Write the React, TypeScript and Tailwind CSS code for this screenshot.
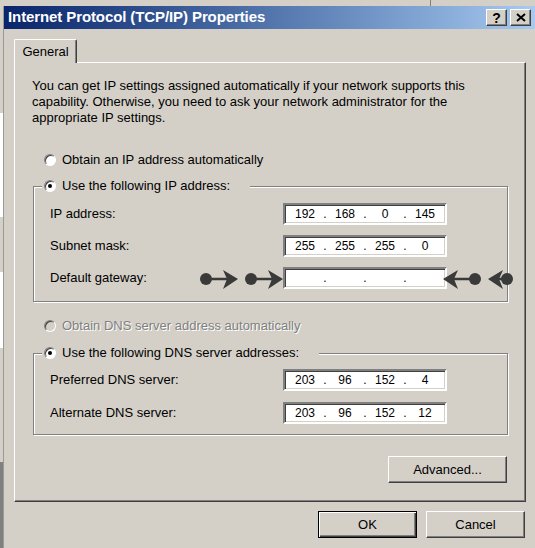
import React, { Fragment } from "react";

// Win2000-style radio button
const Radio = ({ checked = false, disabled = false }: { checked?: boolean; disabled?: boolean }) => (
  <span
    className={
      disabled
        ? "flex h-[12px] w-[12px] shrink-0 items-center justify-center rounded-full border border-t-[#808080] border-l-[#808080] border-r-white border-b-white bg-[#d4d0c8] shadow-[inset_1px_1px_0_#404040]"
        : "flex h-[12px] w-[12px] shrink-0 items-center justify-center rounded-full border border-t-[#808080] border-l-[#808080] border-r-white border-b-white bg-white shadow-[inset_1px_1px_0_#404040]"
    }
  >
    {checked && <span className="h-[4px] w-[4px] rounded-full bg-black" />}
  </span>
);

const IpField = ({ parts }: { parts: string[] }) => (
  <div className="flex h-[22px] w-[164px] items-center border-2 border-t-[#808080] border-l-[#808080] border-r-white border-b-white bg-white pl-[5px] text-[12px] shadow-[inset_1px_1px_0_#404040,inset_-1px_-1px_0_#d4d0c8]">
    {parts.map((p, i) => (
      <Fragment key={i}>
        {i > 0 && <span className="w-[10px] text-center">.</span>}
        <span className="w-[30px] text-center">{p}</span>
      </Fragment>
    ))}
  </div>
);

const Row = ({ label, parts }: { label: string; parts: string[] }) => (
  <div className="flex h-[22px] items-center">
    <span className="w-[233px]">{label}</span>
    <IpField parts={parts} />
  </div>
);

const Legend = ({ children }: { children: React.ReactNode }) => (
  <legend className="ml-[8px] bg-[#d4d0c8]">
    <span className="flex h-[16px] items-center gap-[6px] pl-[2px] pr-[20px]">
      <Radio checked />
      {children}
    </span>
  </legend>
);

const raised =
  "flex items-center justify-center border border-t-white border-l-white border-r-[#404040] border-b-[#404040] bg-[#d4d0c8] shadow-[inset_-1px_-1px_0_#808080]";

export default function App() {
  return (
    <div className="relative flex h-[548px] w-[535px] flex-col overflow-hidden bg-[#d4d0c8] font-['Liberation_Sans',Arial,sans-serif] text-[13px] text-black">
      {/* bit of the window behind */}
      <div className="flex h-[6px] shrink-0">
        <div className="w-[430px]" />
        <div className="w-px bg-[#808080]" />
      </div>

      <div className="flex flex-1">
        <div className="flex w-[3px] flex-col">
          <div className="h-[107px]" />
          <div className="h-[104px] bg-white" />
          <div className="h-[55px]" />
          <div className="h-[76px] bg-white" />
          <div className="h-[114px]" />
          <div className="flex-1 bg-[#808080]" />
        </div>

        <div className="flex flex-1 flex-col border-l border-[#9c9a94]">
          {/* title bar */}
          <div className="flex h-[23px] shrink-0 items-center justify-between bg-linear-to-r from-[#0a246a] to-[#a6caf0] pl-[4px] pr-[4px]">
            <span className="text-[15px] font-bold tracking-[-0.1px] text-white">Internet Protocol (TCP/IP) Properties</span>
            <div className="flex gap-[3px]">
              <div className={`${raised} h-[17px] w-[21px] text-[14px] font-bold leading-none`}>?</div>
              <div className={`${raised} h-[17px] w-[21px]`}>
                <svg width="10" height="9" viewBox="0 0 10 9">
                  <path d="M1 1 L9 8 M9 1 L1 8" stroke="#000" strokeWidth="2" />
                </svg>
              </div>
            </div>
          </div>

          <div className="flex flex-col pl-[10px] pr-[9px]">
            {/* tab */}
            <div className="relative z-10 -mb-[1px] mt-[10px] flex h-[24px] w-[63px] items-center justify-center rounded-t-[2px] border-l border-t border-white border-r border-r-[#404040] bg-[#d4d0c8] shadow-[inset_-1px_0_0_#808080]">
              General
            </div>

            {/* tab page */}
            <div className="flex h-[440px] w-[512px] flex-col border border-t-white border-l-white border-r-[#404040] border-b-[#404040] pl-[17px] pt-[15px] shadow-[inset_-1px_-1px_0_#808080]">
              <p className="leading-[16px]">
                You can get IP settings assigned automatically if your network supports this
                <br />
                capability. Otherwise, you need to ask your network administrator for the
                <br />
                appropriate IP settings.
              </p>

              <div className="ml-[12px] mt-[26px] flex h-[16px] items-center gap-[6px]">
                <Radio />
                <span>Obtain an IP address automatically</span>
              </div>

              <fieldset className="ml-[1px] mt-[10px] w-[475px] border border-[#808080] shadow-[1px_1px_0_#fff,inset_1px_1px_0_#fff]">
                <Legend>Use the following IP address:</Legend>
                <div className="flex flex-col gap-[10px] pb-[12px] pl-[16px] pt-[9px]">
                  <Row label="IP address:" parts={["192", "168", "0", "145"]} />
                  <Row label="Subnet mask:" parts={["255", "255", "255", "0"]} />
                  <Row label="Default gateway:" parts={["", "", "", ""]} />
                </div>
              </fieldset>

              <div className="ml-[12px] mt-[16px] flex h-[16px] items-center gap-[6px]">
                <Radio disabled />
                <span className="text-[#808080] [text-shadow:1px_1px_0_#fff]">Obtain DNS server address automatically</span>
              </div>

              <fieldset className="ml-[1px] mt-[11px] w-[475px] border border-[#808080] shadow-[1px_1px_0_#fff,inset_1px_1px_0_#fff]">
                <Legend>Use the following DNS server addresses:</Legend>
                <div className="flex flex-col gap-[11px] pb-[10px] pl-[16px] pt-[8px]">
                  <Row label="Preferred DNS server:" parts={["203", "96", "152", "4"]} />
                  <Row label="Alternate DNS server:" parts={["203", "96", "152", "12"]} />
                </div>
              </fieldset>

              <div className={`${raised} ml-[356px] mt-[21px] h-[27px] w-[119px]`}>Advanced...</div>
            </div>

            <div className="mt-[9px] flex justify-end gap-[9px] pr-[1px]">
              <div className="flex h-[27px] w-[99px] items-center justify-center border border-black bg-[#d4d0c8] shadow-[inset_1px_1px_0_#fff,inset_-1px_-1px_0_#404040,inset_-2px_-2px_0_#808080]">
                OK
              </div>
              <div className={`${raised} h-[27px] w-[99px]`}>Cancel</div>
            </div>
          </div>
        </div>
      </div>

      {/* arrow annotation drawn over the gateway row */}
      <svg className="pointer-events-none absolute left-0 top-0" width="535" height="548" viewBox="0 0 535 548">
        <g fill="#3a3a3a" stroke="#3a3a3a">
          <circle cx="206" cy="279" r="6" stroke="none" />
          <line x1="206" y1="279" x2="229" y2="279" strokeWidth="2.5" />
          <polygon points="238,279 223,270 227,279 223,289" stroke="none" />
          <circle cx="251" cy="279" r="6" stroke="none" />
          <line x1="251" y1="279" x2="274" y2="279" strokeWidth="2.5" />
          <polygon points="283,279 268,270 272,279 268,289" stroke="none" />

          <polygon points="443,279 458,270 454,279 458,289" stroke="none" />
          <line x1="452" y1="279" x2="475" y2="279" strokeWidth="2.5" />
          <circle cx="475" cy="279" r="6" stroke="none" />
          <polygon points="488,279 503,270 499,279 503,289" stroke="none" />
          <line x1="497" y1="279" x2="507" y2="279" strokeWidth="2.5" />
          <circle cx="507" cy="279" r="6" stroke="none" />
        </g>
      </svg>
    </div>
  );
}
